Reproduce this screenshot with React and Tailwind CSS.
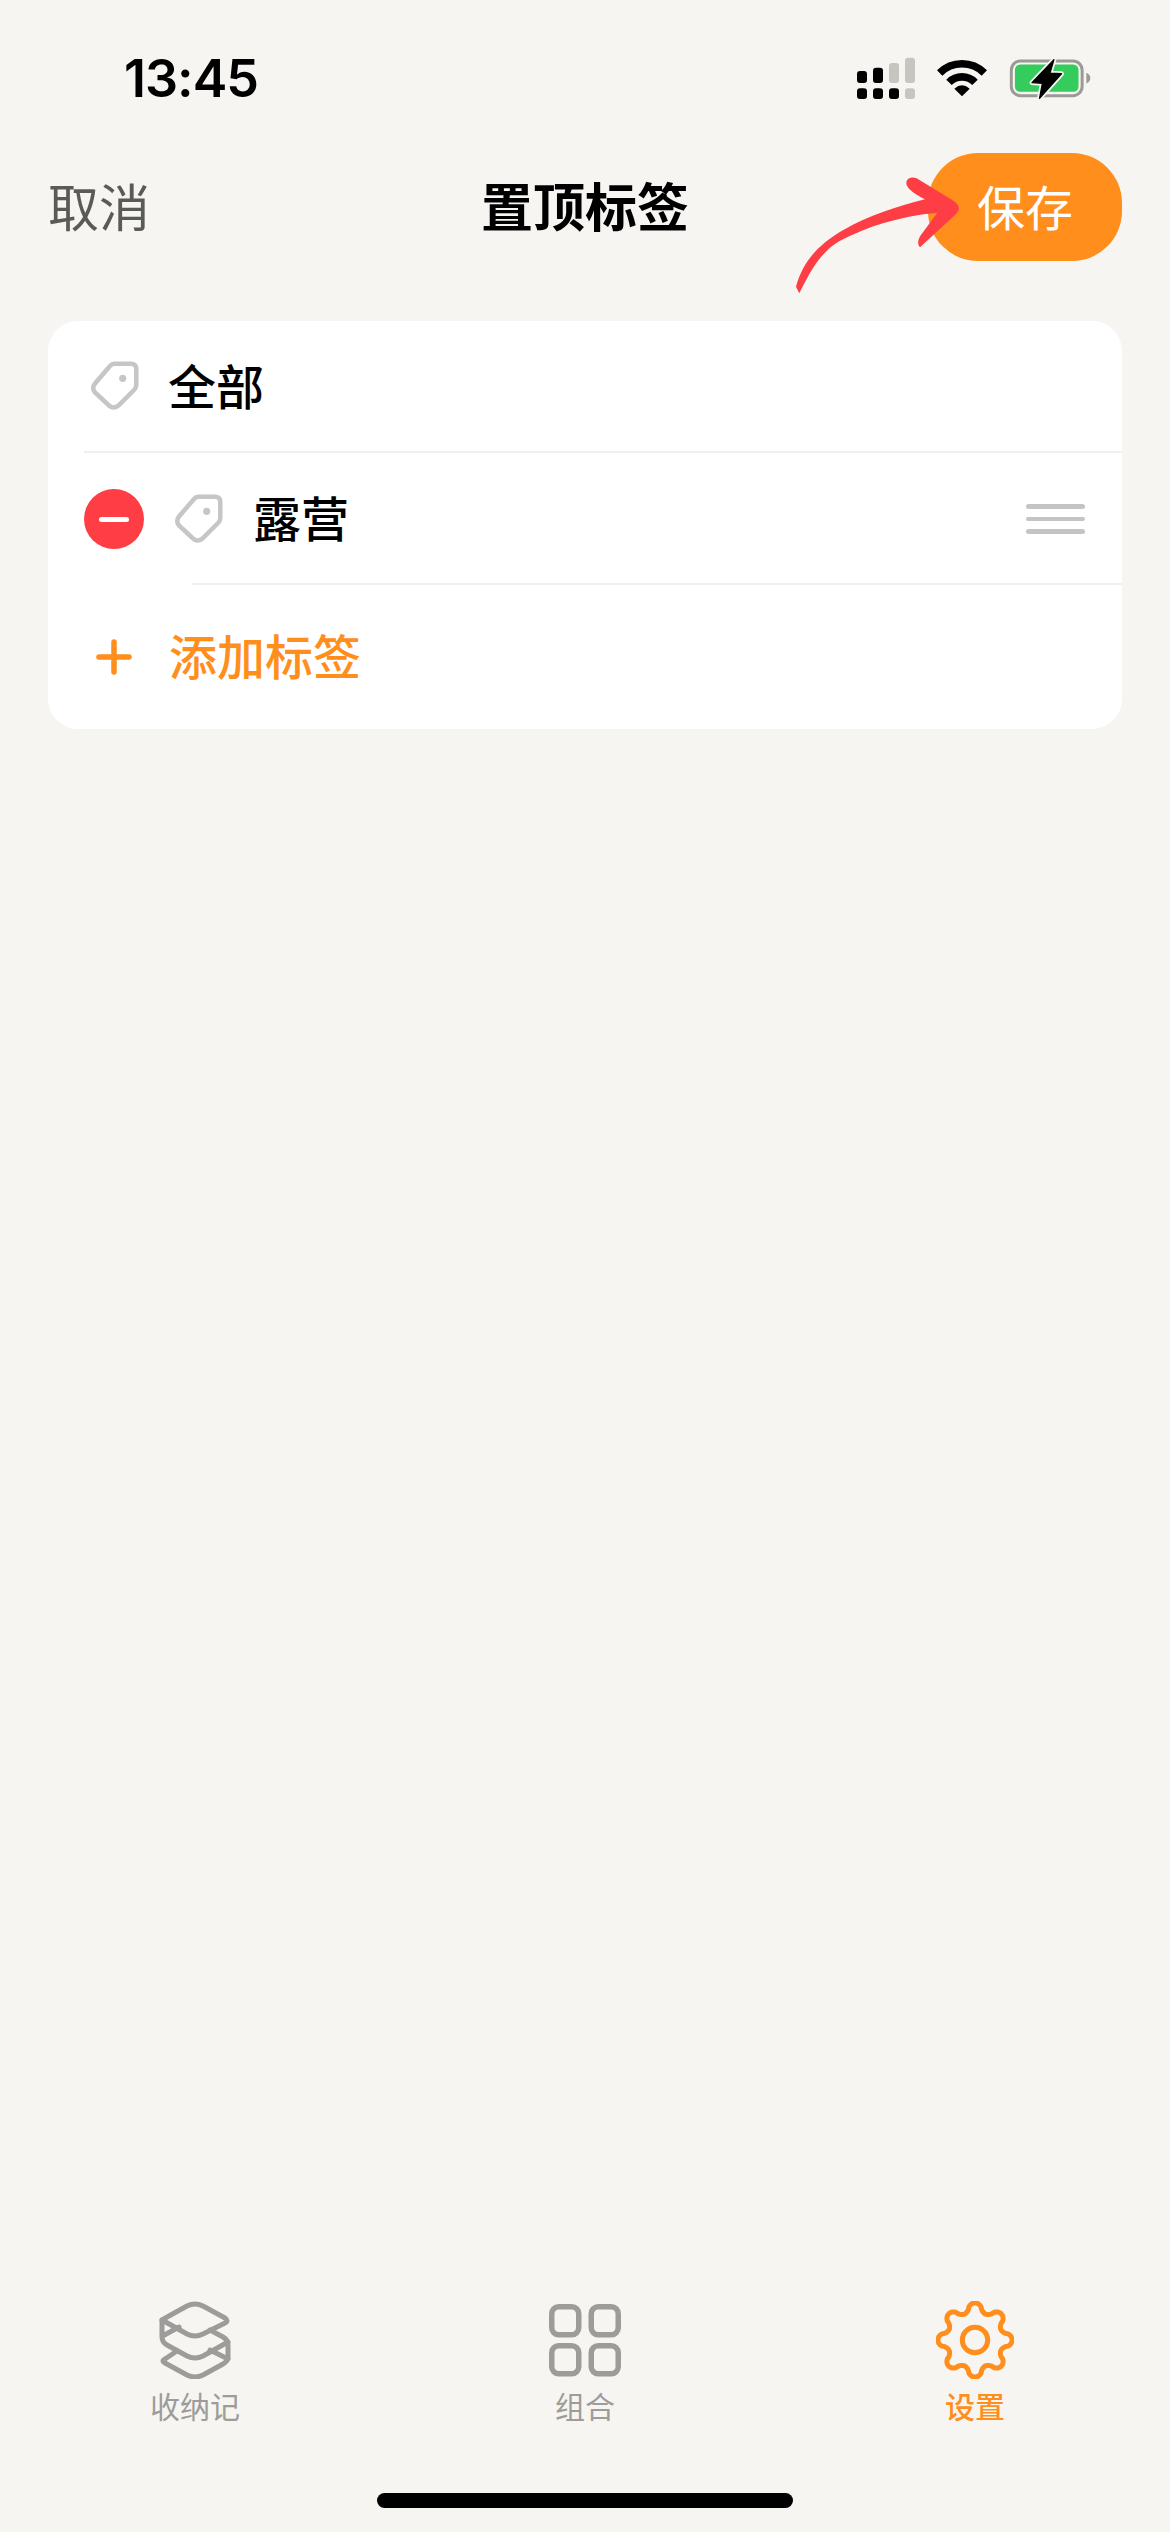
const cjk = "font-['Inter','Noto_Sans_CJK_SC',sans-serif]";

function StatusIcons() {
  return (
    <div className="flex items-center gap-[22px] pr-[79px]">
      <svg width="58" height="42" viewBox="228 78 174 126">
        <rect x="228" y="120" width="30" height="36" rx="9" fill="#000" />
        <rect x="276" y="110" width="30" height="46" rx="9" fill="#000" />
        <rect x="324" y="96" width="30" height="60" rx="9" fill="#c6c5c0" />
        <rect x="372" y="80" width="30" height="76" rx="9" fill="#c6c5c0" />
        <rect x="228" y="172" width="30" height="32" rx="9" fill="#000" />
        <rect x="276" y="172" width="30" height="32" rx="9" fill="#000" />
        <rect x="324" y="172" width="30" height="32" rx="9" fill="#000" />
        <rect x="372" y="172" width="30" height="32" rx="9" fill="#c6c5c0" />
      </svg>
      <svg width="50" height="38" viewBox="470 86 150 114" fill="none">
        <path d="M478 128 A95 95 0 0 1 612 128" stroke="#000" strokeWidth="23" />
        <path d="M506 156 A55 55 0 0 1 584 156" stroke="#000" strokeWidth="23" />
        <path d="M545 198 L522 175 Q545 155 568 175 Z" fill="#000" />
      </svg>
      <svg width="82" height="40" viewBox="686 80 248 122" fill="none" className="overflow-visible">
        <rect x="692" y="89" width="216" height="106" rx="28" stroke="#9a9a97" strokeWidth="9" />
        <rect x="703" y="100" width="194" height="83" rx="16" fill="#34cc5d" />
        <path d="M921 125 Q933 130 933 141 Q933 153 921 158 Z" fill="#9a9a97" />
        <path d="M822 85 L755 155 L787 157 L778 203 L845 128 L810 126 Z" fill="#000" stroke="#f6f5f1" strokeWidth="15" strokeLinejoin="round" />
        <path d="M822 85 L755 155 L787 157 L778 203 L845 128 L810 126 Z" fill="#000" stroke="#000" strokeWidth="4" strokeLinejoin="round" />
      </svg>
    </div>
  );
}

function TagIcon() {
  return (
    <svg width="60" height="60" viewBox="0 1 60 60" fill="none" className="shrink-0">
      <path
        d="M29 8.7 H46 Q51.3 8.7 51.3 14 V30 Q51.3 32.5 49.5 34.5 L33.5 50.5 Q28.5 54.5 24 50.5 L10 37.5 Q6.5 33 10 28.5 L25 11 Q27 8.7 29 8.7 Z"
        stroke="#c6c6c6"
        strokeWidth="4.5"
      />
      <circle cx="37.7" cy="23.3" r="3.6" fill="#c6c6c6" />
    </svg>
  );
}

function ArrowMark() {
  return (
    <svg width="390" height="290" viewBox="0 0 1170 870" className="absolute left-[780px] top-[30px] pointer-events-none">
      <path
        d="M58 790 L48 770 C70 690 120 640 190 600 C270 555 350 530 435 508 C410 495 385 480 380 465 C375 448 392 438 410 445 L520 512 C540 525 542 540 525 555 L420 652 C410 640 415 625 425 612 L472 548 C360 558 260 590 180 632 C120 665 85 735 58 790 Z"
        fill="#ff3d44"
      />
    </svg>
  );
}

function StackIcon() {
  return (
    <svg width="72" height="78" viewBox="0 0 72 78" fill="none" stroke="#9d9c9a" strokeWidth="5" strokeLinejoin="round" strokeLinecap="round">
      <path d="M28 5 Q36 1 44 5 L66 17 Q70 20 66 22 L44 33 Q36 37 28 33 L3 19 Q8 16 28 5 Z" />
      <path d="M3 19 V36 Q3 41 8 44 L28 55 Q36 59 44 55 L69 41" />
      <path d="M3.6 35 L20 26" />
      <path d="M51 29 L64 36 Q69 39 69 44 V56 Q69 60 64 63 L44 74 Q36 78 28 74 L6 62 Q2 60 6 58 L18 50" />
      <path d="M51 49 L69 58" />
    </svg>
  );
}

function GridIcon() {
  return (
    <svg width="72" height="78" viewBox="0 0 72 78" fill="none" stroke="#9d9c9a" strokeWidth="5.5">
      <rect x="2.75" y="5.75" width="27" height="28" rx="7" />
      <rect x="42.25" y="5.75" width="27" height="28" rx="7" />
      <rect x="2.75" y="44.75" width="27" height="28" rx="7" />
      <rect x="42.25" y="44.75" width="27" height="28" rx="7" />
    </svg>
  );
}

// lobed gear outline, one tooth every 45deg
function gearPath() {
  const pts = [];
  for (let i = 0; i < 240; i++) {
    const a = (i / 240) * Math.PI * 2;
    const c = Math.cos(8 * a);
    const r = 32.5 + 4.6 * Math.sign(c) * Math.pow(Math.abs(c), 0.65);
    pts.push(`${(39 + r * Math.sin(a)).toFixed(2)} ${(39 - r * Math.cos(a)).toFixed(2)}`);
  }
  return `M${pts.join(' L')} Z`;
}

function GearIcon() {
  return (
    <svg width="78" height="78" viewBox="0 0 78 78" fill="none" stroke="#ff8e1c" strokeWidth="5">
      <path d={gearPath()} strokeLinejoin="round" />
      <circle cx="39" cy="39" r="12.7" />
    </svg>
  );
}

function Tab({ icon, label, active }) {
  return (
    <div className="flex flex-col items-center">
      {icon}
      <span className={`mt-[11px] text-[30px] leading-[34px] ${active ? 'text-[#ff8e1c] font-medium' : 'text-[#9d9c9a]'}`}>
        {label}
      </span>
    </div>
  );
}

export default function App() {
  return (
    <div className={`relative w-[1170px] h-[2532px] bg-[#f6f5f1] flex flex-col overflow-hidden ${cjk}`}>
      {/* Status bar */}
      <div className="h-[153px] pt-[3px] flex items-center justify-between shrink-0">
        <span className="pl-[124px] pt-[2px] text-[52px] leading-none font-semibold tracking-[-1px] text-black">13:45</span>
        <StatusIcons />
      </div>

      {/* Nav */}
      <div className="h-[108px] px-[48px] grid grid-cols-[1fr_auto_1fr] items-center shrink-0">
        <span className="pt-[3px] text-[51px] leading-none text-[#5a5a58]">取消</span>
        <span className="pt-[3px] text-[52px] leading-none font-bold text-black">置顶标签</span>
        <div className="flex justify-end">
          <button className="w-[194px] h-[108px] pt-[3px] rounded-[50px] bg-[#ff8e1c] text-white text-[48px] leading-none">
            保存
          </button>
        </div>
      </div>

      {/* List card */}
      <div className="mt-[60px] mx-[48px] bg-white rounded-[30px] flex flex-col shrink-0">
        <div className="h-[130px] pl-[37px] flex items-center gap-[23px]">
          <TagIcon />
          <span className="pt-[3px] text-[48px] leading-none font-medium text-black">全部</span>
        </div>
        <div className="ml-[36px] h-[2px] bg-[#f0f0ef]" />
        <div className="h-[130px] pt-[2px] pl-[36px] pr-[37px] flex items-center">
          <div className="w-[60px] h-[60px] rounded-full bg-[#ff3d44] flex items-center justify-center shrink-0">
            <div className="w-[30px] h-[5px] rounded-full bg-white" />
          </div>
          <div className="ml-[25px]">
            <TagIcon />
          </div>
          <span className="ml-[24px] pt-[1px] text-[48px] leading-none font-medium text-black">露营</span>
          <div className="ml-auto w-[59px] flex flex-col gap-[8px]">
            <div className="h-[4.5px] rounded-full bg-[#c4c4c4]" />
            <div className="h-[4.5px] rounded-full bg-[#c4c4c4]" />
            <div className="h-[4.5px] rounded-full bg-[#c4c4c4]" />
          </div>
        </div>
        <div className="ml-[144px] h-[2px] bg-[#f0f0ef]" />
        <div className="h-[144px] pl-[48px] flex items-center">
          <svg width="36" height="36" viewBox="0 0 36 36" stroke="#ff8e1c" strokeWidth="5.5" strokeLinecap="round" className="shrink-0">
            <path d="M3 18 H33 M18 3 V33" />
          </svg>
          <span className="ml-[37px] pt-[1px] text-[48px] leading-none font-medium text-[#ff8e1c]">添加标签</span>
        </div>
      </div>

      <div className="flex-1" />

      {/* Tab bar */}
      <div className="grid grid-cols-3 shrink-0">
        <Tab icon={<StackIcon />} label="收纳记" />
        <Tab icon={<GridIcon />} label="组合" />
        <Tab icon={<GearIcon />} label="设置" active />
      </div>
      <div className="mt-[69px] mb-[24px] mx-auto w-[416px] h-[15px] rounded-full bg-black shrink-0" />

      <ArrowMark />
    </div>
  );
}
